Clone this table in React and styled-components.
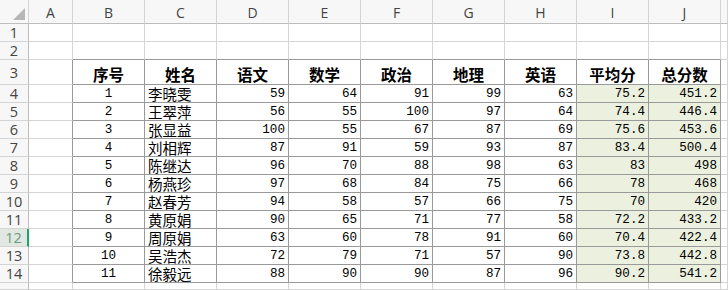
import styled, { createGlobalStyle } from "styled-components";

const GlobalStyle = createGlobalStyle`
  html, body {
    margin: 0;
    padding: 0;
    background: #ffffff;
    width: 728px;
    height: 290px;
    overflow: hidden;
  }
  * {
    box-sizing: border-box;
  }
`;

const LETTERS = ["A", "B", "C", "D", "E", "F", "G", "H", "I", "J", ""];
const COL_WIDTHS = [29, 44, 72, 72, 72, 72, 72, 72, 72, 72, 72, 7];
const ROW_HEIGHTS = [24, 18, 18, 25, 18, 18, 18, 18, 18, 18, 18, 18, 18, 18, 18, 7];
const ACTIVE_ROW = 12;

const HEADINGS = ["序号", "姓名", "语文", "数学", "政治", "地理", "英语", "平均分", "总分数"];

const students = [
  [1, "李晓雯", 59, 64, 91, 99, 63, "75.2", "451.2"],
  [2, "王翠萍", 56, 55, 100, 97, 64, "74.4", "446.4"],
  [3, "张显益", 100, 55, 67, 87, 69, "75.6", "453.6"],
  [4, "刘相辉", 87, 91, 59, 93, 87, "83.4", "500.4"],
  [5, "陈继达", 96, 70, 88, 98, 63, "83", "498"],
  [6, "杨燕珍", 97, 68, 84, 75, 66, "78", "468"],
  [7, "赵春芳", 94, 58, 57, 66, 75, "70", "420"],
  [8, "黄原娟", 90, 65, 71, 77, 58, "72.2", "433.2"],
  [9, "周原娟", 63, 60, 78, 91, 60, "70.4", "422.4"],
  [10, "吴浩杰", 72, 79, 71, 57, 90, "73.8", "442.8"],
  [11, "徐毅远", 88, 90, 90, 87, 96, "90.2", "541.2"],
];

const Sheet = styled.div`
  display: grid;
  grid-template-columns: ${COL_WIDTHS.map((w) => `${w}px`).join(" ")};
  grid-template-rows: ${ROW_HEIGHTS.map((h) => `${h}px`).join(" ")};
  width: 728px;
  overflow: hidden;
`;

const Corner = styled.div`
  display: flex;
  align-items: flex-end;
  justify-content: flex-end;
  padding: 0 3px 3px 0;
  background: #f7f7f7;
  border-right: 1px solid #d4d4d4;
  border-bottom: 1px solid #bdbdbd;
`;

const ColHead = styled.div`
  display: flex;
  align-items: center;
  justify-content: center;
  padding-top: 1px;
  background: #f7f7f7;
  border-right: 1px solid #d4d4d4;
  border-bottom: 1px solid #bdbdbd;
  font-family: "Open Sans", "Noto Sans", sans-serif;
  font-size: 14px;
  color: #444444;
`;

const RowHead = styled.div`
  display: flex;
  align-items: center;
  justify-content: center;
  padding-top: 1px;
  background: ${(p) => (p.$active ? "#e1e7e3" : "#f7f7f7")};
  border-right: ${(p) => (p.$active ? "2px solid #21a366" : "1px solid #bdbdbd")};
  border-bottom: 1px solid #d4d4d4;
  font-family: "Open Sans", "Noto Sans", sans-serif;
  font-size: 14.5px;
  line-height: 16px;
  color: ${(p) => (p.$active ? "#6c9a80" : "#444444")};
`;

const Cell = styled.div`
  display: flex;
  align-items: ${(p) => (p.$heading ? "center" : "flex-end")};
  justify-content: ${(p) =>
    p.$align === "left" ? "flex-start" : p.$align === "right" ? "flex-end" : "center"};
  padding: ${(p) => (p.$heading ? "3px 2px 0" : "0 3px 0 3px")};
  background: ${(p) => (p.$fill ? "#ebf1de" : "#ffffff")};
  border-right: 1px solid ${(p) => (p.$darkRight ? "#9a9a9a" : "#d4d4d4")};
  border-bottom: 1px solid ${(p) => (p.$darkBottom ? "#9a9a9a" : "#d4d4d4")};
  font-family: ${(p) =>
    p.$mono
      ? `"Liberation Mono", "DejaVu Sans Mono", monospace`
      : `"Noto Sans CJK SC", sans-serif`};
  font-size: ${(p) => (p.$heading ? "15.5px" : p.$mono ? "12.6px" : "14.5px")};
  font-weight: ${(p) => (p.$heading ? 700 : 400)};
  line-height: 16px;
  color: #000000;
  white-space: nowrap;
`;

// sheet row 3 is the header of the table, rows 4..14 hold the students
function cellContent(row, col) {
  if (row === 3 && col >= 1 && col <= 9) {
    return { text: HEADINGS[col - 1], heading: true, align: "center" };
  }
  const s = students[row - 4];
  if (s && col >= 1 && col <= 9) {
    const v = s[col - 1];
    return {
      text: String(v),
      mono: col !== 2,
      align: col === 1 ? "center" : col === 2 ? "left" : "right",
      fill: col >= 8,
    };
  }
  return { text: "" };
}

function inTable(row, col) {
  return row >= 3 && row <= 14 && col >= 1 && col <= 9;
}

export default function App() {
  const rows = ROW_HEIGHTS.length - 1;
  return (
    <>
      <GlobalStyle />
      <Sheet>
        <Corner>
          <svg width="12" height="12" viewBox="0 0 12 12">
            <polygon points="12,0 12,12 0,12" fill="#b7b7b7" />
          </svg>
        </Corner>
        {LETTERS.map((l, i) => (
          <ColHead key={i}>{l}</ColHead>
        ))}
        {Array.from({ length: rows }, (_, i) => i + 1).map((row) => [
          <RowHead key={`h${row}`} $active={row === ACTIVE_ROW}>
            {row < 15 ? row : ""}
          </RowHead>,
          ...LETTERS.map((_, col) => {
            const c = cellContent(row, col);
            const darkRight = inTable(row, col) || inTable(row, col + 1);
            const darkBottom = inTable(row, col) || inTable(row + 1, col);
            return (
              <Cell
                key={`${row}-${col}`}
                $align={c.align}
                $heading={c.heading}
                $mono={c.mono}
                $fill={c.fill}
                $darkRight={darkRight}
                $darkBottom={darkBottom}
              >
                {c.text}
              </Cell>
            );
          }),
        ])}
      </Sheet>
    </>
  );
}
